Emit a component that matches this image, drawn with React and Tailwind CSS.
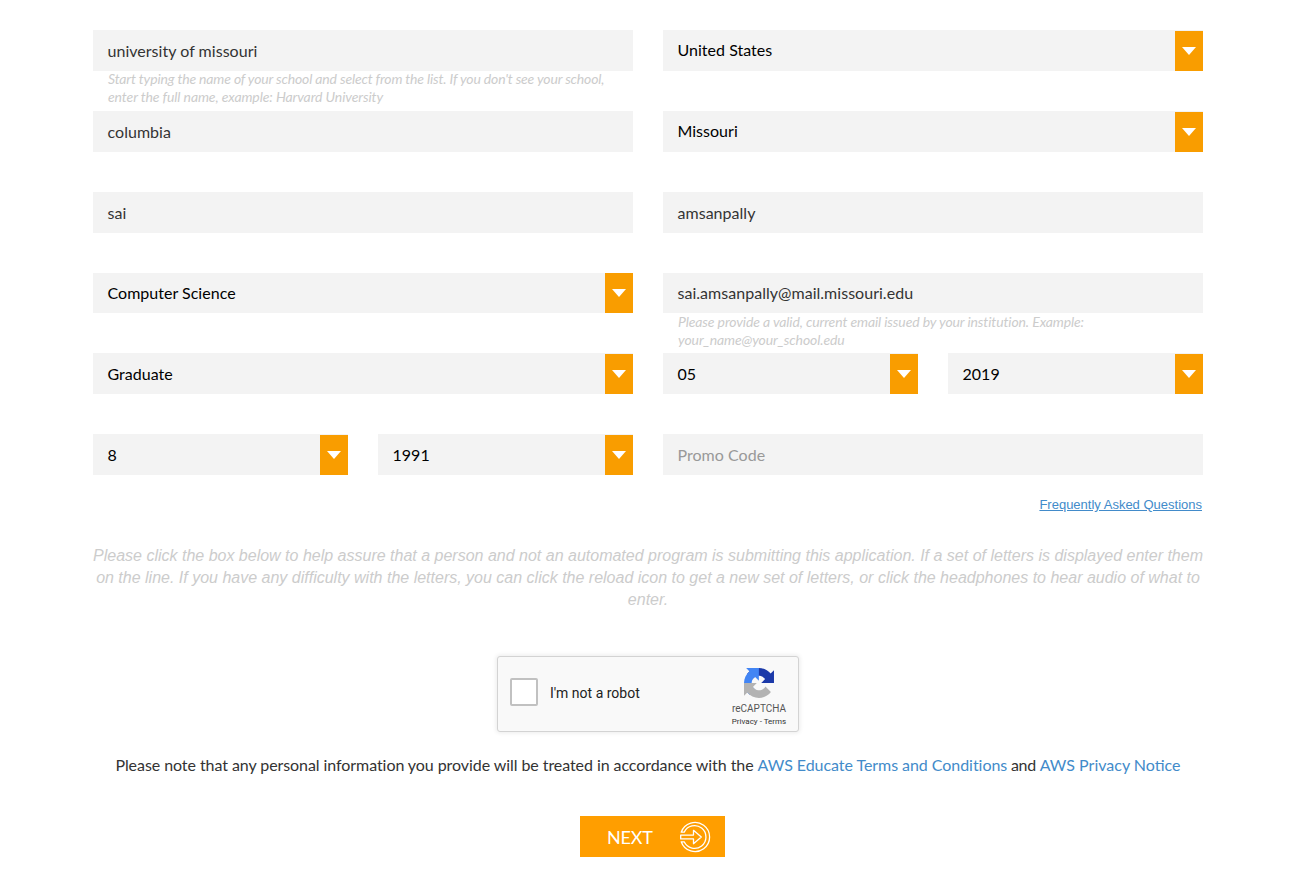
import React from "react";

function Field({ value, tone = "text-[#333]", pad = "pt-px", className = "h-[41px]" }) {
  return (
    <div className={`flex min-w-0 flex-1 items-center bg-[#f3f3f3] pl-[14.5px] ${pad} ${className}`}>
      <span className={`tracking-[0.03px] ${tone}`}>{value}</span>
    </div>
  );
}

function Select({ value, pad = "", className = "h-[41px]" }) {
  return (
    <div className={`flex min-w-0 flex-1 items-end justify-between bg-[#f3f3f3] pl-[14.5px] ${className}`}>
      <span className={`self-center tracking-[0.02px] text-black ${pad}`}>{value}</span>
      <span className="flex h-10 w-7 justify-center bg-[#f99d00] pt-4">
        <svg width="14" height="8" viewBox="0 0 14 8" className="block">
          <path d="M0 0H14L7 8Z" fill="#fff" />
        </svg>
      </span>
    </div>
  );
}

function Hint({ className = "", children }) {
  return (
    <p className={`pl-[15px] text-[14px] leading-[18px] whitespace-nowrap text-[#ccc] italic ${className}`}>
      {children}
    </p>
  );
}

function RecaptchaLogo() {
  return (
    <svg width="30" height="30" viewBox="0 0 64 64" className="block">
      <path d="M64 31.955a33 33 0 0 0-.037-1.377V4.687l-7.158 7.158C50.947 4.674 42.033.093 32.05.093c-10.389 0-19.618 4.96-25.458 12.64l11.733 11.856a15.55 15.55 0 0 1 4.754-5.334c2.05-1.6 4.952-2.906 8.968-2.906.485 0 .86.057 1.135.163 4.976.393 9.288 3.14 11.828 7.124l-8.306 8.306c10.521-.04 22.405-.066 27.291.005" fill="#1c3aa9" />
      <path d="M31.862.094a33 33 0 0 0-1.377.037H4.594l7.158 7.158C4.58 13.147 0 22.06 0 32.046c0 10.388 4.96 19.618 12.64 25.458l11.856-11.733a15.55 15.55 0 0 1-5.334-4.754c-1.6-2.05-2.906-4.952-2.906-8.968 0-.485.057-.86.163-1.135.393-4.976 3.14-9.288 7.124-11.828l8.306 8.306c-.041-10.521-.067-22.405.005-27.291" fill="#4285f4" />
      <path d="M0 32.045c.001.462.013.92.037 1.377v25.891l7.158-7.158c5.858 7.171 14.772 11.752 24.755 11.752 10.388 0 19.618-4.96 25.458-12.64L45.675 39.411a15.55 15.55 0 0 1-4.754 5.334c-2.05 1.6-4.952 2.906-8.968 2.906-.485 0-.86-.057-1.135-.163-4.976-.393-9.288-3.14-11.828-7.124l8.306-8.306C16.775 32.099 4.892 32.125 0 32.053" fill="#b3b3b3" />
    </svg>
  );
}

function NextIcon() {
  return (
    <svg width="32" height="32" viewBox="0 0 32 32" fill="none" stroke="#fff" strokeWidth="1.3" className="block">
      <path d="M2.2 11.2A14.6 14.6 0 1 1 2.2 20.8H5.2A11.4 11.4 0 1 0 5.2 11.2Z" strokeLinejoin="round" />
      <path d="M1.7 14.1H14.5V9.3L22.3 16L14.5 22.7V17.9H1.7Z" strokeLinejoin="round" />
    </svg>
  );
}

export default function App() {
  return (
    <main className="h-[869px] overflow-hidden bg-white pt-[30px] pl-[93px] font-['Lato',sans-serif] text-[16px] leading-[22px]">
      <div className="w-[1110px]">
        <div className="grid grid-cols-2 grid-rows-[81px_81px_81px_80px_81px_41px] gap-x-[30px]">
          <div className="flex flex-col">
            <Field value="university of missouri" className="h-[41px] flex-none" />
            <Hint className="-mt-px">
              <span className="tracking-[-0.155px]">
                Start typing the name of your school and select from the list. If you don't see your school,
              </span>
              <br />
              <span className="tracking-[-0.1px]">enter the full name, example: Harvard University</span>
            </Hint>
          </div>
          <div className="flex items-start"><Select value="United States" pad="pb-px" /></div>

          <div className="flex items-start"><Field value="columbia" /></div>
          <div className="flex items-start"><Select value="Missouri" pad="pb-px" /></div>

          <div className="flex items-start"><Field value="sai" /></div>
          <div className="flex items-start"><Field value="amsanpally" /></div>

          <div className="flex items-start"><Select value="Computer Science" className="h-10" /></div>
          <div className="flex flex-col">
            <Field value="sai.amsanpally@mail.missouri.edu" pad="" className="h-10 flex-none" />
            <Hint className="tracking-[-0.11px]">
              Please provide a valid, current email issued by your institution. Example:
              <br />
              your_name@your_school.edu
            </Hint>
          </div>

          <div className="flex items-start"><Select value="Graduate" pad="pt-px" /></div>
          <div className="flex items-start gap-[30px]">
            <Select value="05" pad="pt-px" />
            <Select value="2019" pad="pt-px" />
          </div>

          <div className="flex items-start gap-[30px]">
            <Select value="8" pad="pt-px" />
            <Select value="1991" pad="pt-px" />
          </div>
          <div className="flex items-start"><Field value="Promo Code" tone="text-[#999]" /></div>
        </div>

        <div className="mt-[21px] flex justify-end pr-px font-['Liberation_Sans',Arial,sans-serif] text-[13px] leading-[18px]">
          <a href="#faq" className="text-[#428bca] underline">Frequently Asked Questions</a>
        </div>

        <p className="mt-[31px] text-center font-['Liberation_Sans',Arial,sans-serif] text-[16px] leading-[22px] whitespace-nowrap text-[#ccc] italic">
          Please click the box below to help assure that a person and not an automated program is submitting this application. If a set of letters is displayed enter them
          <br />
          on the line. If you have any difficulty with the letters, you can click the reload icon to get a new set of letters, or click the headphones to hear audio of what to
          <br />
          enter.
        </p>

        <div className="mt-[45px] ml-[404px] flex h-[76px] w-[302px] justify-between rounded-[3px] border border-[#d3d3d3] bg-[#f9f9f9] font-['Roboto',sans-serif] shadow-[0_0_4px_1px_rgba(0,0,0,0.08)]">
          <div className="flex items-center pb-1 pl-3">
            <span className="block h-7 w-7 rounded-[2px] border-2 border-[#c1c1c1] bg-white" />
            <span className="ml-3 pt-[2px] text-[14px] leading-[17px] text-[#222]">I'm not a robot</span>
          </div>
          <div className="flex w-[78px] flex-col items-center pt-[11px] text-[#555]">
            <RecaptchaLogo />
            <span className="mt-[6px] text-[10px] leading-[10px]">reCAPTCHA</span>
            <span className="mt-[3px] text-[8px] leading-[10px] text-[#333]">Privacy - Terms</span>
          </div>
        </div>

        <p className="mt-[22px] text-center tracking-[-0.07px] whitespace-nowrap text-[#333]">
          Please note that any personal information you provide will be treated in accordance with the{" "}
          <a href="#terms" className="tracking-[-0.05px] text-[#428bca]">AWS Educate Terms and Conditions</a>
          <span className="tracking-[-0.3px]"> and </span>
          <a href="#privacy" className="tracking-[0px] text-[#428bca]">AWS Privacy Notice</a>
        </p>

        <button className="mt-10 ml-[487px] flex h-[41px] w-[145px] items-center bg-[#ff9e00] pl-[27px] text-[18px] text-white">
          <span className="w-[72px] text-left tracking-[-0.2px]">NEXT</span>
          <NextIcon />
        </button>
      </div>
    </main>
  );
}
